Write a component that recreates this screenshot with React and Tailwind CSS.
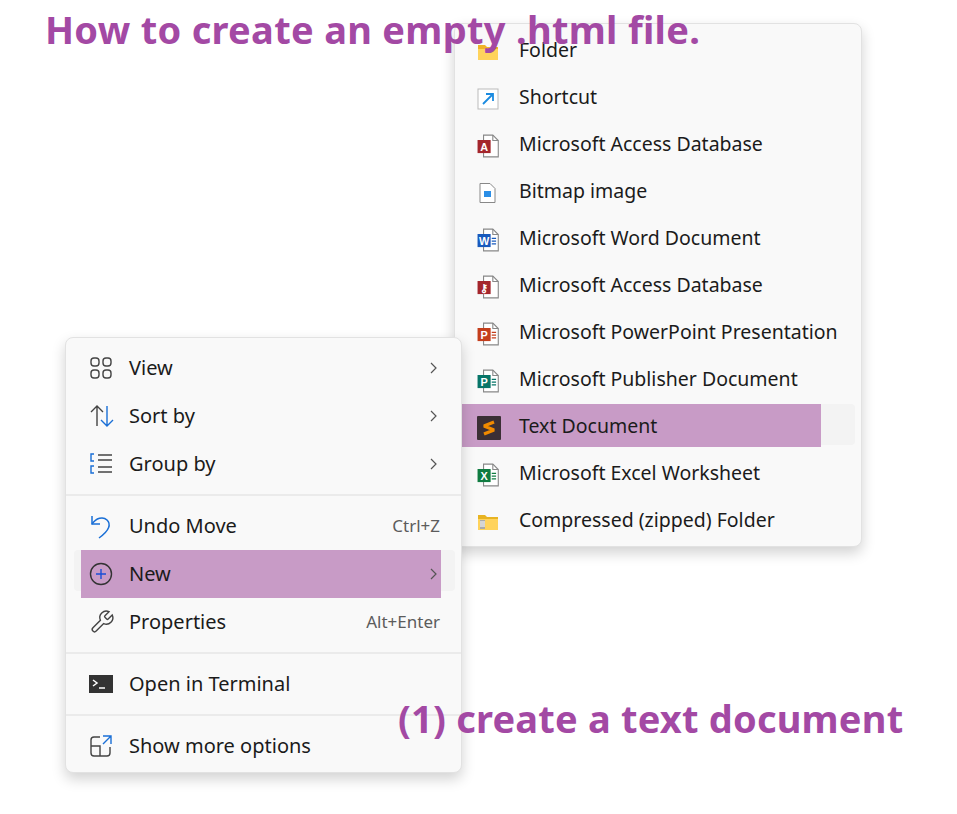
import React from "react";

const F = { fontFamily: '"Noto Sans", "Open Sans", sans-serif' };

const Doc = ({ color, letter, lines = true }) => (
  <svg width="24" height="24" viewBox="0 0 22 22">
    <path d="M6 1h8.5l5 5v15H6z" fill="#fff" stroke="#888" strokeWidth="1" />
    <path d="M14.5 1v5h5" fill="none" stroke="#888" strokeWidth="1" />
    {lines && <path d="M13.5 9.5h4M13.5 12h4M13.5 14.5h4" stroke={color} strokeWidth="1.2" />}
    <rect x="0.5" y="5.5" width="12" height="12" fill={color} />
    <text x="6.5" y="15.2" textAnchor="middle" fontSize="10" fontWeight="bold" fill="#fff" fontFamily="Liberation Sans, sans-serif">{letter}</text>
  </svg>
);

const Chev = () => (
  <svg width="10" height="14" viewBox="0 0 10 14"><path d="M3 2l5 5-5 5" fill="none" stroke="#555" strokeWidth="1.2" /></svg>
);

const leftIcons = {
  view: (
    <svg width="24" height="24" viewBox="0 0 24 24" fill="none" stroke="#444" strokeWidth="1.4">
      <rect x="2" y="2" width="8" height="8" rx="3" /><rect x="14" y="2" width="8" height="8" rx="3" />
      <rect x="2" y="14" width="8" height="8" rx="3" /><rect x="14" y="14" width="8" height="8" rx="3" />
    </svg>
  ),
  sort: (
    <svg width="26" height="24" viewBox="0 0 26 24" fill="none" strokeWidth="1.4">
      <path d="M8 22V2M2 8l6-6 6 6" stroke="#444" />
      <path d="M18 2v20M12 16l6 6 6-6" stroke="#1a6fd6" />
    </svg>
  ),
  group: (
    <svg width="24" height="24" viewBox="0 0 24 24" fill="none" strokeWidth="1.4">
      <path d="M5 2H2v7h3M5 14H2v7h3" stroke="#1a6fd6" />
      <path d="M9 3h14M9 8h14M9 15h14M9 20h14" stroke="#444" />
    </svg>
  ),
  undo: (
    <svg width="24" height="26" viewBox="0 0 24 26" fill="none" stroke="#1a6fd6" strokeWidth="1.5">
      <path d="M3 3v8h8" /><path d="M3 11c4-6 11-8 15-4s3 10-8 18" />
    </svg>
  ),
  new: (
    <svg width="24" height="24" viewBox="0 0 24 24" fill="none" strokeWidth="1.4">
      <circle cx="12" cy="12" r="10.5" stroke="#333" /><path d="M12 7v10M7 12h10" stroke="#1a4fd6" />
    </svg>
  ),
  props: (
    <svg width="26" height="26" viewBox="0 0 24 24" fill="none" stroke="#444" strokeWidth="1.3">
      <path d="M14.7 6.3a1 1 0 000 1.4l1.6 1.6a1 1 0 001.4 0l3.77-3.77a6 6 0 01-7.94 7.94l-6.91 6.91a2.12 2.12 0 01-3-3l6.91-6.91a6 6 0 017.94-7.94l-3.76 3.76z" />
    </svg>
  ),
  term: (
    <svg width="24" height="20" viewBox="0 0 24 20">
      <rect x="0" y="1" width="24" height="18" fill="#333" />
      <path d="M4 6l4 3-4 3" stroke="#fff" strokeWidth="1.5" fill="none" /><path d="M10 14h6" stroke="#fff" strokeWidth="1.5" />
    </svg>
  ),
  more: (
    <svg width="24" height="24" viewBox="0 0 24 24" fill="none" strokeWidth="1.4">
      <path d="M11 3H5a3 3 0 00-3 3v13a3 3 0 003 3h13a3 3 0 003-3v-6" stroke="#444" />
      <path d="M2 12h9v10" stroke="#444" />
      <path d="M14 2h8v8M22 2l-8 8" stroke="#1a6fd6" />
    </svg>
  ),
};

const rightIcons = [
  ["Folder", (
    <svg width="22" height="22" viewBox="0 0 22 22"><path d="M1 4h7l2 2h11v13H1z" fill="#f0b429" /><rect x="1" y="8" width="20" height="11" fill="#ffd35c" /></svg>
  )],
  ["Shortcut", (
    <svg width="22" height="22" viewBox="0 0 22 22"><rect x="1" y="1" width="20" height="20" fill="#fff" stroke="#bbb" /><path d="M6 16L16 6M9 6h7v7" stroke="#1b8be0" strokeWidth="1.8" fill="none" /></svg>
  )],
  ["Microsoft Access Database", <Doc color="#a4262c" letter="A" lines={false} />],
  ["Bitmap image", (
    <svg width="22" height="22" viewBox="0 0 22 22"><path d="M3 1.5h10l5 5v14H3z" fill="#fff" stroke="#888" /><rect x="7" y="9" width="7" height="6" fill="#2b8ee6" /></svg>
  )],
  ["Microsoft Word Document", <Doc color="#185abd" letter="W" />],
  ["Microsoft Access Database", <Doc color="#a4262c" letter="⚷" lines={false} />],
  ["Microsoft PowerPoint Presentation", <Doc color="#c43e1c" letter="P" />],
  ["Microsoft Publisher Document", <Doc color="#077568" letter="P" />],
  ["Text Document", (
    <svg width="24" height="24" viewBox="0 0 24 24"><rect x="0" y="0" width="24" height="24" rx="1" fill="#3b2f35" /><path d="M17 6L7 10l10 4-10 4" fill="none" stroke="#f08a00" strokeWidth="3.2" strokeLinejoin="bevel" /></svg>
  )],
  ["Microsoft Excel Worksheet", <Doc color="#107c41" letter="X" />],
  ["Compressed (zipped) Folder", (
    <svg width="22" height="22" viewBox="0 0 22 22"><path d="M1 4h7l2 2h11v13H1z" fill="#e8b422" /><rect x="1" y="8" width="20" height="11" fill="#ffd35c" /><rect x="3" y="9" width="5" height="9" fill="#aaa" /><path d="M3 11h5M3 13h5M3 15h5" stroke="#fff" /></svg>
  )],
];

function LRow({ icon, label, right, chev, hl }) {
  return (
    <div className="relative h-12 flex items-center px-[15px]">
      {hl && <div className="absolute left-[8px] right-[6px] top-0 h-[41px] rounded bg-[#f3f3f3]" />}
      {hl && <div className="absolute left-[15px] top-0 w-[360px] h-[48px] bg-[#c89bc6]" />}
      <div className="relative w-[48px] flex items-center justify-start pl-[8px]">{icon}</div>
      <span className="relative flex-1 text-[20px] text-[#1b1b1b]">{label}</span>
      {right && <span className="relative text-[17px] text-[#5c5c5c] mr-[6px]">{right}</span>}
      {chev && <span className="relative mr-[8px]"><Chev /></span>}
    </div>
  );
}

const Sep = () => <div className="h-[2px] bg-[#ebebeb] my-[6px]" />;

export default function App() {
  return (
    <div className="relative w-[957px] h-[814px] bg-white overflow-hidden" style={F}>
      <div className="absolute left-[454px] top-[23px] w-[408px] h-[524px] rounded-lg bg-[#f9f9f9] border border-[#e2e2e2] shadow-[0_6px_14px_rgba(0,0,0,0.18)] pt-[4px] flex flex-col">
        {rightIcons.map(([label, icon], i) => {
          const hl = label === "Text Document";
          return (
            <div key={i} className="relative h-[47px] flex items-center">
              {hl && <div className="absolute left-[6px] right-[6px] top-[0px] h-[41px] rounded bg-[#f3f3f3]" />}
              {hl && <div className="absolute left-[6px] top-[0px] w-[360px] h-[43px] bg-[#c89bc6]" />}
              <div className="relative w-[64px] flex justify-start pl-[22px]">{icon}</div>
              <span className="relative text-[19.5px] text-[#1b1b1b] -mt-[4px]">{label}</span>
            </div>
          );
        })}
      </div>

      <div className="absolute left-[65px] top-[337px] w-[397px] h-[436px] rounded-lg bg-[#f9f9f9] border border-[#e2e2e2] shadow-[0_6px_14px_rgba(0,0,0,0.18)] pt-[6px] flex flex-col">
        <LRow icon={leftIcons.view} label="View" chev />
        <LRow icon={leftIcons.sort} label="Sort by" chev />
        <LRow icon={leftIcons.group} label="Group by" chev />
        <Sep />
        <LRow icon={leftIcons.undo} label="Undo Move" right="Ctrl+Z" />
        <LRow icon={leftIcons.new} label="New" chev hl />
        <LRow icon={leftIcons.props} label="Properties" right="Alt+Enter" />
        <Sep />
        <LRow icon={leftIcons.term} label="Open in Terminal" />
        <Sep />
        <LRow icon={leftIcons.more} label="Show more options" />
      </div>

      <div className="absolute left-[45px] top-[3px] text-[38px] font-bold text-[#a349a4] leading-[52px] tracking-[0.3px]">How to create an empty .html file.</div>
      <div className="absolute left-[398px] top-[692px] text-[38px] font-bold text-[#a349a4] leading-[52px] tracking-[0.2px]">(1) create a text document</div>
    </div>
  );
}
